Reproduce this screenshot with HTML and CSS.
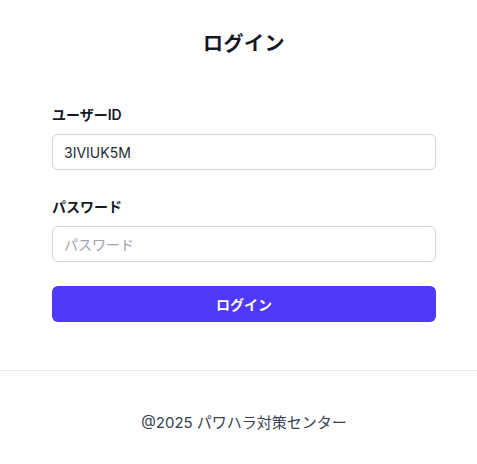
FILE: index.html
```html
<!DOCTYPE html>
<html lang="ja">
<head>
<meta charset="utf-8">
<title>ログイン</title>
<link rel="stylesheet" href="styles.css">
</head>
<body>
<main class="main">
  <div class="wrap">
    <h1 class="title">ログイン</h1>
    <form class="form">
      <div class="field">
        <label class="label" for="uid">ユーザーID</label>
        <input class="input" id="uid" type="text" value="3IVIUK5M">
      </div>
      <div class="field field-pw">
        <label class="label" for="pw">パスワード</label>
        <input class="input" id="pw" type="password" placeholder="パスワード">
      </div>
      <button class="btn" type="button">ログイン</button>
    </form>
  </div>
</main>
<footer class="footer">
  <div class="wrap">
    <p class="copy">@2025 パワハラ対策センター</p>
  </div>
</footer>
</body>
</html>
```

FILE: styles.css
```css
* { box-sizing: border-box; }
html, body { margin: 0; padding: 0; background: #fff; }
body {
  font-family: Inter, "Noto Sans CJK JP", "Noto Sans", sans-serif;
  color: #111827;
}
.wrap {
  width: 384px;
  margin-left: 52px;
}
.main {
  padding-top: 30px;
  padding-bottom: 48px;
}
.title {
  margin: 0;
  font-size: 20px;
  line-height: 28px;
  font-weight: 700;
  text-align: center;
  color: #111827;
  letter-spacing: 0.5px;
}
.form {
  margin-top: 47px;
  display: flex;
  flex-direction: column;
}
.field {
  display: flex;
  flex-direction: column;
}
.field-pw { margin-top: 27px; }
.label {
  font-size: 14px;
  line-height: 20px;
  font-weight: 600;
  color: #111827;
  margin-bottom: 9px;
}
.input {
  height: 36px;
  width: 100%;
  border: 1px solid #d1d5db;
  border-radius: 6px;
  padding: 0 11px;
  font-family: inherit;
  font-size: 14px;
  color: #1f2937;
  background: #fff;
  outline: none;
}
.input::placeholder { color: #9ca3af; }
.btn {
  margin-top: 24px;
  height: 36px;
  width: 100%;
  border: none;
  border-radius: 6px;
  background: #4f39f6;
  color: #fff;
  font-family: inherit;
  font-size: 14px;
  font-weight: 700;
}
.footer {
  border-top: 1px solid #e5e7eb;
  padding-top: 42px;
}
.copy {
  margin: 0;
  text-align: center;
  font-size: 15px;
  line-height: 20px;
  color: #374151;
}
```
